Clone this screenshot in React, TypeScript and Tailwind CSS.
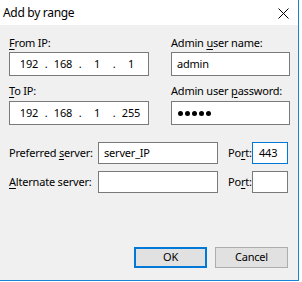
import React from "react";

const font = { fontFamily: '"Noto Sans", "Open Sans", sans-serif' };

function IpBox({ parts }: { parts: string[] }) {
  return (
    <div className="mt-[2px] flex h-[24px] w-[140px] items-center border border-[#7a7a7a] bg-white pl-[2px]">
      {parts.map((p, i) => (
        <React.Fragment key={i}>
          {i > 0 && <span className="flex w-0 justify-center">.</span>}
          <span className="w-[34px] text-center">{p}</span>
        </React.Fragment>
      ))}
    </div>
  );
}

export default function App() {
  return (
    <div className="h-[282px] w-[302px] bg-white text-[11px] tracking-[-0.2px] text-black" style={font}>
      <div className="flex h-[281px] w-[299px] flex-col border-b border-r border-[#1883d7]">
        <div className="flex h-[25px] items-center justify-between bg-white pl-[3px] pr-[9px]">
          <span className="text-[12px] tracking-[-0.3px]">Add by range</span>
          <svg width="11" height="11" viewBox="0 0 11 11" className="mt-[1px]">
            <path d="M0.5 0.5 L10.5 10.5 M10.5 0.5 L0.5 10.5" stroke="#000" strokeWidth="1" fill="none" />
          </svg>
        </div>
        <div className="flex flex-1 flex-col bg-[#f0f0f0]">
          <div className="flex pl-[9px] pt-[10px]">
            <div className="flex w-[140px] flex-col">
              <div className="h-[15px] leading-[15px]">
                <u className="underline-offset-2">F</u>rom IP:
              </div>
              <IpBox parts={["192", "168", "1", "1"]} />
              <div className="mt-[7px] h-[15px] leading-[15px]">
                <u className="underline-offset-2">T</u>o IP:
              </div>
              <div className="mt-[1px]">
                <IpBox parts={["192", "168", "1", "255"]} />
              </div>
            </div>
            <div className="ml-[22px] flex w-[119px] flex-col">
              <div className="h-[15px] leading-[15px]">
                Admin <u className="underline-offset-2">u</u>ser name:
              </div>
              <div className="mt-[2px] flex h-[24px] items-center border border-[#7a7a7a] bg-white pl-[5px]">
                admin
              </div>
              <div className="mt-[7px] h-[15px] leading-[15px]">
                Admin user <u className="underline-offset-2">p</u>assword:
              </div>
              <div className="mt-[3px] flex h-[24px] items-center gap-[2px] border border-[#7a7a7a] bg-white pl-[6px]">
                {[0, 1, 2, 3, 4].map((i) => (
                  <span key={i} className="h-[5px] w-[5px] rounded-full bg-black" />
                ))}
              </div>
            </div>
          </div>

          <div className="mt-[17px] flex items-center pl-[9px]">
            <div className="w-[89px]">
              Preferred <u className="underline-offset-2">s</u>erver:
            </div>
            <div className="flex h-[22px] w-[120px] items-center border border-[#7a7a7a] bg-white pl-[5px]">
              server_IP
            </div>
            <div className="ml-[10px] w-[24px]">
              Po<u className="underline-offset-2">r</u>t:
            </div>
            <div className="flex h-[22px] w-[36px] items-center border border-[#0078d7] bg-white pl-[6px]">
              443
            </div>
          </div>

          <div className="mt-[7px] flex items-center pl-[9px]">
            <div className="w-[89px]">
              <u className="underline-offset-2">A</u>lternate server:
            </div>
            <div className="h-[22px] w-[120px] border border-[#7a7a7a] bg-white" />
            <div className="ml-[10px] w-[24px]">
              Po<u className="underline-offset-2">r</u>t:
            </div>
            <div className="h-[22px] w-[36px] border border-[#7a7a7a] bg-white" />
          </div>

          <div className="mt-auto flex justify-end gap-[8px] pb-[12px] pr-[10px]">
            <button className="flex h-[21px] w-[73px] items-center justify-center border-2 border-[#0078d7] bg-[#e1e1e1]">
              OK
            </button>
            <button className="flex h-[21px] w-[73px] items-center justify-center border border-[#adadad] bg-[#e1e1e1]">
              Cancel
            </button>
          </div>
        </div>
      </div>
    </div>
  );
}
